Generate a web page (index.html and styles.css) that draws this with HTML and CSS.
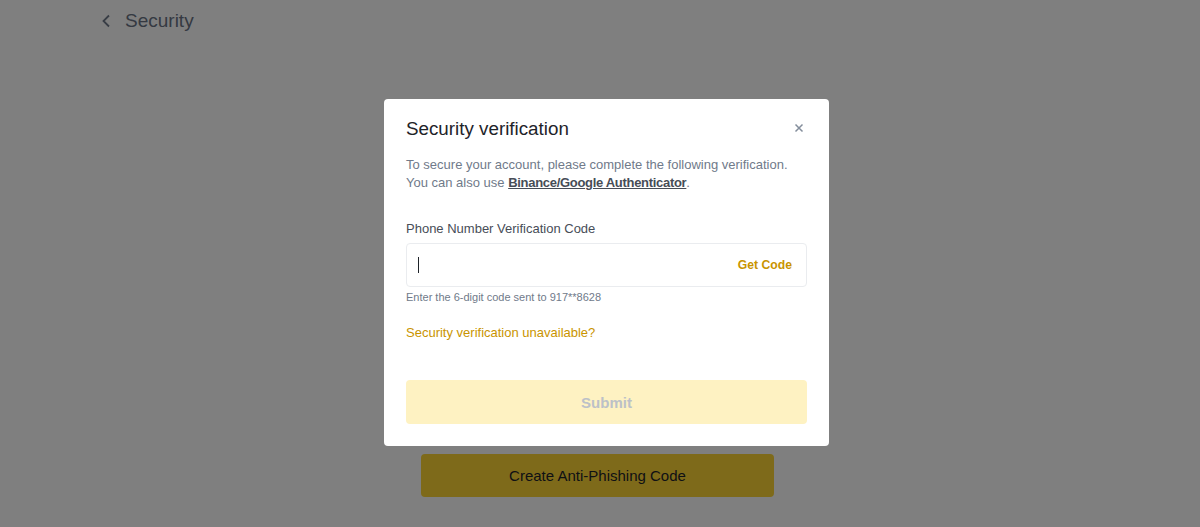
FILE: index.html
```html
<!DOCTYPE html>
<html>
<head>
<meta charset="utf-8">
<link rel="stylesheet" href="styles.css">
</head>
<body>
<div class="page">
  <header class="topbar">
    <svg class="back" width="10" height="14" viewBox="0 0 10 14"><path d="M8 1.5 L2.5 7 L8 12.5" fill="none" stroke="#707a8a" stroke-width="1.8"/></svg>
    <span class="topbar-title">Security</span>
  </header>
  <main class="content">
    <button class="cta">Create Anti-Phishing Code</button>
  </main>
</div>
<div class="overlay">
  <div class="modal">
    <div class="modal-head">
      <h2 class="modal-title">Security verification</h2>
      <svg class="close" width="10" height="10" viewBox="0 0 10 10"><path d="M1.5 1.5 L8.5 8.5 M8.5 1.5 L1.5 8.5" stroke="#848e9c" stroke-width="1.5"/></svg>
    </div>
    <p class="desc">To secure your account, please complete the following verification.<br>You can also use <a class="desc-link">Binance/Google Authenticator</a>.</p>
    <label class="label">Phone Number Verification Code</label>
    <div class="input">
      <span class="caret"></span>
      <span class="get-code">Get Code</span>
    </div>
    <p class="hint">Enter the 6-digit code sent to 917**8628</p>
    <a class="unavail">Security verification unavailable?</a>
    <button class="submit">Submit</button>
  </div>
</div>
</body>
</html>
```
FILE: styles.css
```css
* { box-sizing: border-box; }
html, body { margin: 0; padding: 0; }
body {
  font-family: "Liberation Sans", Arial, sans-serif;
  background: #ffffff;
  width: 1200px;
  height: 527px;
  overflow: hidden;
}
.page {
  display: flex;
  flex-direction: column;
  height: 527px;
}
.topbar {
  display: flex;
  align-items: center;
  height: 41px;
  padding-left: 101px;
  gap: 14px;
}
.back { display: block; }
.topbar-title {
  font-size: 19px;
  color: #6a7384;
}
.content {
  flex: 1;
  display: flex;
  flex-direction: column;
  justify-content: flex-end;
  align-items: flex-start;
  padding: 0 0 30px 421px;
}
.cta {
  width: 353px;
  height: 43px;
  border: none;
  border-radius: 4px;
  background: #fcd535;
  color: #1e2329;
  font-family: inherit;
  font-size: 15px;
}
.overlay {
  position: fixed;
  inset: 0;
  background: rgba(0, 0, 0, 0.5);
  display: flex;
  align-items: flex-start;
  padding: 99px 0 0 384px;
}
.modal {
  width: 445px;
  background: #ffffff;
  border-radius: 4px;
  padding: 19px 22px 22px 22px;
  display: flex;
  flex-direction: column;
}
.modal-head {
  display: flex;
  justify-content: space-between;
  align-items: center;
  height: 22px;
}
.modal-title {
  margin: 0;
  font-size: 18.8px;
  font-weight: 400;
  color: #1e2329;
}
.close { margin-right: 3px; margin-top: -2px; }
.desc {
  margin: 16px 0 0;
  font-size: 13px;
  line-height: 18px;
  color: #707a8a;
}
.desc-link {
  color: #474d57;
  font-weight: 700;
  text-decoration: underline;
  letter-spacing: -0.3px;
}
.label {
  margin-top: 28px;
  font-size: 13px;
  line-height: 18px;
  color: #474d57;
}
.input {
  margin-top: 5px;
  height: 44px;
  border: 1px solid #eaecef;
  border-radius: 4px;
  display: flex;
  align-items: center;
  justify-content: space-between;
  padding: 0 14px 0 11px;
}
.caret {
  width: 1px;
  height: 16px;
  background: #1e2329;
}
.get-code {
  font-size: 12.2px;
  font-weight: 700;
  color: #c99400;
}
.hint {
  margin: 3px 0 0;
  font-size: 11px;
  line-height: 14px;
  color: #707a8a;
}
.unavail {
  margin-top: 20px;
  font-size: 13px;
  line-height: 18px;
  color: #c99400;
}
.submit {
  margin-top: 38px;
  height: 44px;
  border: none;
  border-radius: 4px;
  background: #fef2c2;
  color: #bcc1c8;
  font-family: inherit;
  font-size: 15px;
  font-weight: 700;
}
```
